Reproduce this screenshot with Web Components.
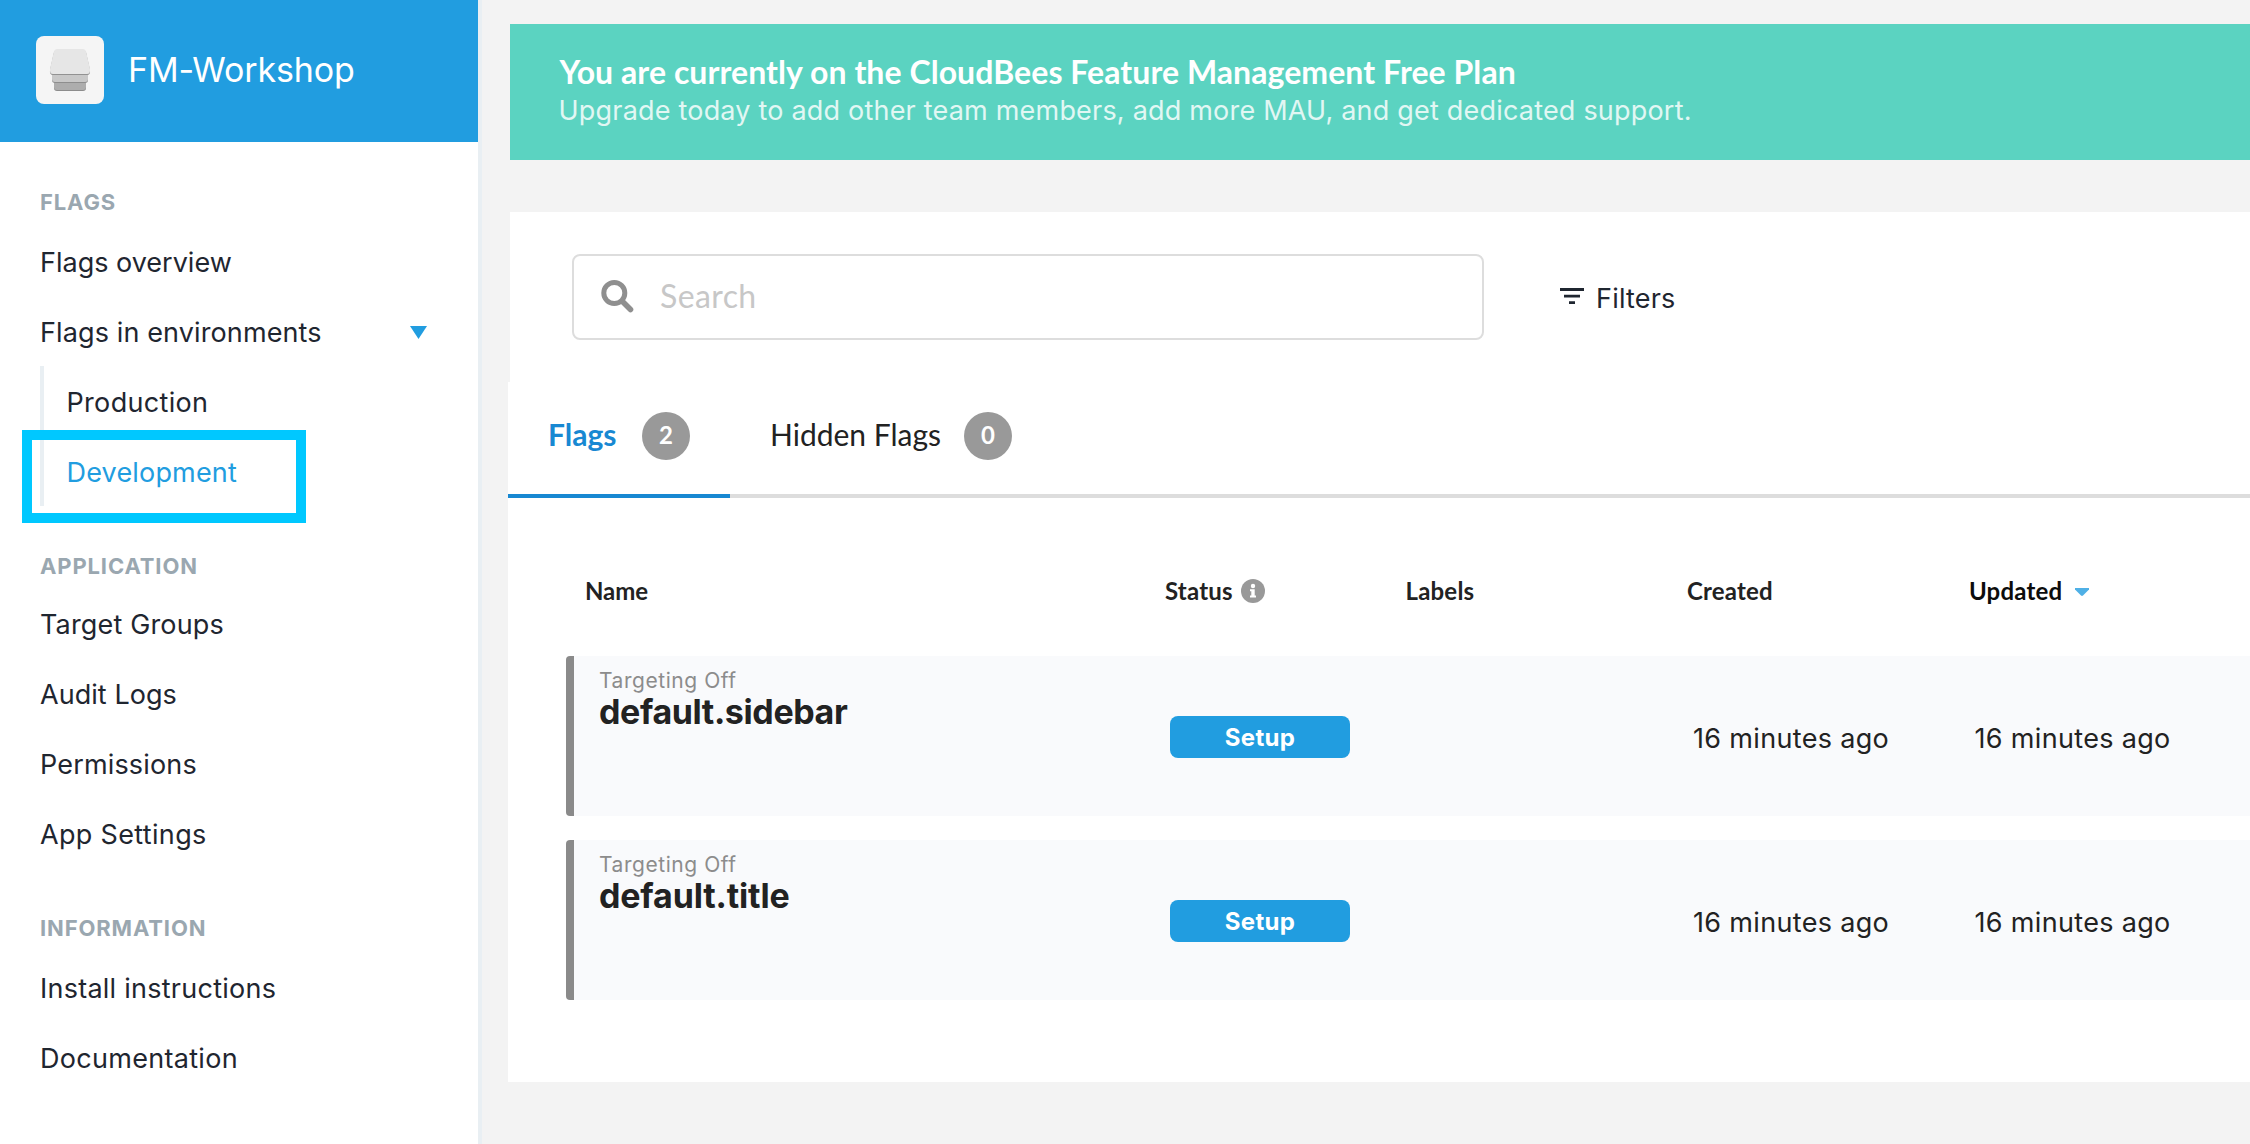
<!DOCTYPE html>
<html lang="en">
<head>
<meta charset="utf-8">
<title>FM-Workshop</title>
<style>
  html, body { margin: 0; height: 100%; }
  body { background: #f3f3f3; font-family: Inter, "Liberation Sans", sans-serif; color: #1f2630; overflow: hidden; }
</style>
</head>
<body>
<fm-app></fm-app>
<script>
const define = (name, html, init) => {
  const template = document.createElement('template');
  template.innerHTML = html;
  customElements.define(name, class extends HTMLElement {
    connectedCallback() {
      if (this.shadowRoot) return;
      this.attachShadow({ mode: 'open' }).append(template.content.cloneNode(true));
      if (init) init.call(this, this.shadowRoot);
    }
  });
};

/* ---------- sidebar ---------- */
define('fm-brand', `
<style>
  :host { display: flex; align-items: center; height: 142px; padding-left: 36px; box-sizing: border-box; padding-bottom: 2px; background: #219de0; color: #fff; }
  svg { display: block; width: 68px; height: 68px; margin-right: 24px; }
  span { font-size: 34px; line-height: 40px; letter-spacing: -.13px; white-space: nowrap; }
</style>
<svg viewBox="0 0 68 68">
  <rect width="68" height="68" rx="8" fill="#f5f5f5"/>
  <path d="M18 47h32v5q0 3-3 3H21q-3 0-3-3z" fill="#8c8c8c"/>
  <path d="M18 46h32v5q0 3-3 3H21q-3 0-3-3z" fill="#adadad"/>
  <path d="M16 39h36v5q0 3-3 3H19q-3 0-3-3z" fill="#8e8e8e"/>
  <path d="M16 38h36v5q0 3-3 3H19q-3 0-3-3z" fill="#c8c8c8"/>
  <path d="M21.500 14h25q3 0 3.700 3l3.800 17q.6 5-3 5H17q-3.600 0-3-5l3.800-17q.7-3 3.700-3z" fill="#929292"/>
  <path d="M21.500 13h25q3 0 3.700 3l3.800 17q.6 5-3 5H17q-3.600 0-3-5l3.800-17q.7-3 3.700-3z" fill="#e6e6e6"/>
</svg>
<span><slot></slot></span>`);

define('nav-section', `
<style>
  :host { display: block; }
  h2 { margin: 0 0 var(--gap, 9px) 40px; font-size: 22px; font-weight: 700; line-height: 30px; letter-spacing: .87px; color: #9aa7b0; }
</style>
<h2></h2><slot></slot>`, function (root) {
  root.querySelector('h2').textContent = this.getAttribute('heading');
});

define('nav-item', `
<style>
  :host { display: flex; justify-content: space-between; align-items: flex-start; height: 70px; line-height: 73px; padding: 0 51px 0 40px; box-sizing: border-box; font-size: 27px; white-space: nowrap; color: #1f2630; }
  :host([active]) { color: #219de0; }
  svg { display: none; width: 17px; height: 13px; margin-top: 30px; }
  :host([expandable]) svg { display: block; }
</style>
<span><slot></slot></span>
<svg viewBox="0 0 17 13"><path d="M0 0h17L8.500 13z" fill="#219de0"/></svg>`, function () {
  this.style.letterSpacing = (this.getAttribute('track') || 0) + 'px';
});

define('nav-tree', `
<style>
  :host { display: block; margin-left: 40px; border-left: 4px solid #e9eff3; }
  ::slotted(nav-item) { padding-left: 22.500px !important; }
</style>
<slot></slot>`);

define('focus-frame', `
<style>
  :host { position: absolute; left: 22px; top: 430px; width: 284px; height: 93px; box-sizing: border-box; border: 10px solid #00c8ff; pointer-events: none; }
</style>`);

define('fm-sidebar', `
<style>
  :host { display: flex; flex-direction: column; width: 482px; height: 1144px; box-sizing: border-box; border-right: 4px solid #e9eff3; background: #fff; flex: none; }
  nav { display: flex; flex-direction: column; padding-top: 45px; }
  nav-section + nav-section { margin-top: 45px; }
</style>
<fm-brand>FM-Workshop</fm-brand>
<nav>
  <nav-section heading="FLAGS">
    <nav-item track="0">Flags overview</nav-item>
    <nav-item track=".12" expandable>Flags in environments</nav-item>
    <nav-tree>
      <nav-item track=".33">Production</nav-item>
      <nav-item track=".18" active>Development</nav-item>
    </nav-tree>
  </nav-section>
  <nav-section heading="APPLICATION" style="--gap:7px">
    <nav-item track=".16">Target Groups</nav-item>
    <nav-item track=".05">Audit Logs</nav-item>
    <nav-item track=".16">Permissions</nav-item>
    <nav-item track=".33">App Settings</nav-item>
  </nav-section>
  <nav-section heading="INFORMATION">
    <nav-item track=".25">Install instructions</nav-item>
    <nav-item track=".3">Documentation</nav-item>
  </nav-section>
</nav>
<focus-frame></focus-frame>`);

/* ---------- content ---------- */
define('plan-banner', `
<style>
  :host { display: block; height: 136px; margin-left: 2px; padding: 28px 0 0 49.500px; box-sizing: border-box; background: #5bd3c1; color: #fff; white-space: nowrap; }
  b { display: block; font: 700 32px/39px Lato, sans-serif; letter-spacing: .06px; }
  span { display: block; font-size: 27px; line-height: 39px; letter-spacing: .2px; opacity: .82; margin-left: -1px; }
</style>
<b>You are currently on the CloudBees Feature Management Free Plan</b>
<span>Upgrade today to add other team members, add more MAU, and get dedicated support.</span>`);

define('search-box', `
<style>
  :host { display: flex; align-items: center; width: 912px; height: 86px; box-sizing: border-box; border: 2px solid #ddd; border-radius: 8px; padding-left: 27px; background: #fff; }
  svg { width: 33px; height: 33px; display: block; margin-bottom: 2px; }
  span { font: 400 32px/39px Lato, sans-serif; letter-spacing: .4px; color: #c7c7c7; margin-left: 26px; padding-bottom: 3px; }
</style>
<svg viewBox="0 0 33 33" fill="none" stroke="#8f8f8f"><circle cx="13.300" cy="13" r="10.500" stroke-width="5"/><path d="M21.500 21.500l8 8" stroke-width="5.600" stroke-linecap="round"/></svg>
<span>Search</span>`);

define('filter-button', `
<style>
  :host { display: flex; align-items: flex-start; font-size: 27px; line-height: 33px; letter-spacing: .2px; }
  svg { width: 24px; height: 16px; margin: 6px 12px 0 0; display: block; }
</style>
<svg viewBox="0 0 24 16" fill="#1f2630"><path d="M0 0h24v3H0zM4 6.700h16v2.800H4zM9 13.300h6V16H9z"/></svg>
<span>Filters</span>`);

define('flag-tab', `
<style>
  :host { display: flex; align-items: center; height: 116px; box-sizing: border-box; padding: 0 40px 4px; border-bottom: 4px solid #ddd; font: 400 30px/36px Lato, sans-serif; color: #222; white-space: nowrap; }
  :host([active]) { width: 222px; border-color: #1888d2; color: #1888d2; font-weight: 700; }
  .label { padding-bottom: 4px; margin-right: 23px; }
  :host([active]) .label { margin-right: 25.500px; }
  .count { flex: none; width: 48px; height: 48px; border-radius: 50%; box-sizing: border-box; background: #999; color: #fff; text-align: center; font: 700 24px/45px Lato, sans-serif; }
</style>
<span class="label"><slot></slot></span><span class="count"></span>`, function (root) {
  root.querySelector('.count').textContent = this.getAttribute('count');
});

define('flag-tabs', `
<style>
  :host { display: flex; }
  i { flex: 1; border-bottom: 4px solid #ddd; }
</style>
<slot></slot><i></i>`);

define('flag-head', `
<style>
  :host { display: grid; grid-template-columns: 580px 240.500px 281.500px 282px auto; padding: 78px 0 51px 77px; font: 700 24px/29px Lato, sans-serif; letter-spacing: .2px; color: #222; white-space: nowrap; }
  div { display: flex; }
  .info { width: 24px; height: 24px; margin: 3px 0 0 8.500px; display: block; }
  .sort { width: 14px; height: 8px; margin: 12px 0 0 13px; display: block; }
  .name { letter-spacing: -.1px; }
  .sorted { color: #0c0c0c; }
</style>
<div class="name">Name</div>
<div>Status<svg class="info" viewBox="0 0 24 24"><circle cx="12" cy="12" r="12" fill="#999"/><circle cx="12" cy="7" r="2.200" fill="#fff"/><path d="M9 10.300h4.700v6.200H15v2H9v-2h1.300v-4.200H9z" fill="#fff"/></svg></div>
<div>Labels</div>
<div>Created</div>
<div class="sorted">Updated<svg class="sort" viewBox="0 0 14 8"><path d="M0 0h14v1.500L8 7.500q-1 .8-2 0L0 1.500z" fill="#4fb0e6"/></svg></div>`);

define('flag-row', `
<style>
  :host { display: grid; grid-template-columns: 571px 239px 284px 281.500px auto; height: 160px; margin-left: 58px; box-sizing: border-box; border-left: 8px solid #8a8a8a; border-radius: 4px 0 0 4px; padding-left: 25px; background: #f9fafc; align-items: center; white-space: nowrap; }
  .name { align-self: start; padding-top: 12px; }
  small { display: block; font-size: 21px; line-height: 25px; letter-spacing: .56px; color: #8c8c8c; }
  b { display: block; font-size: 34px; line-height: 37px; font-weight: 700; color: #222; }
  button { all: unset; width: 180px; height: 42px; margin-top: 2px; border-radius: 8px; background: #219de0; color: #fff; text-align: center; font-size: 24px; font-weight: 700; line-height: 44px; letter-spacing: .3px; }
  time { margin-top: 5px; font-size: 27px; line-height: 33px; letter-spacing: .33px; color: #222; }
</style>
<div class="name"><small>Targeting Off</small><b><slot></slot></b></div>
<button>Setup</button>
<span></span>
<time>16 minutes ago</time>
<time>16 minutes ago</time>`, function (root) {
  root.querySelector('b').style.letterSpacing = this.getAttribute('track') + 'px';
});

define('flag-panel', `
<style>
  :host { display: block; margin-top: 52px; }
  .tools { display: flex; align-items: flex-start; height: 170px; margin-left: 2px; padding: 42px 0 0 62px; box-sizing: border-box; background: #fff; }
  filter-button { margin: 28px 0 0 76px; }
  .list { height: 700px; background: #fff; }
  flag-row + flag-row { margin-top: 24px; }
</style>
<div class="tools"><search-box></search-box><filter-button></filter-button></div>
<div class="list">
  <flag-tabs><flag-tab active count="2">Flags</flag-tab><flag-tab count="0">Hidden Flags</flag-tab></flag-tabs>
  <flag-head></flag-head>
  <flag-row track="-.39">default.sidebar</flag-row>
  <flag-row track="-.16">default.title</flag-row>
</div>`);

define('fm-app', `
<style>
  :host { display: flex; width: 2250px; height: 1144px; }
  main { flex: 1; min-width: 0; padding: 24px 0 0 26px; }
</style>
<fm-sidebar></fm-sidebar>
<main><plan-banner></plan-banner><flag-panel></flag-panel></main>`);
</script>
</body>
</html>
